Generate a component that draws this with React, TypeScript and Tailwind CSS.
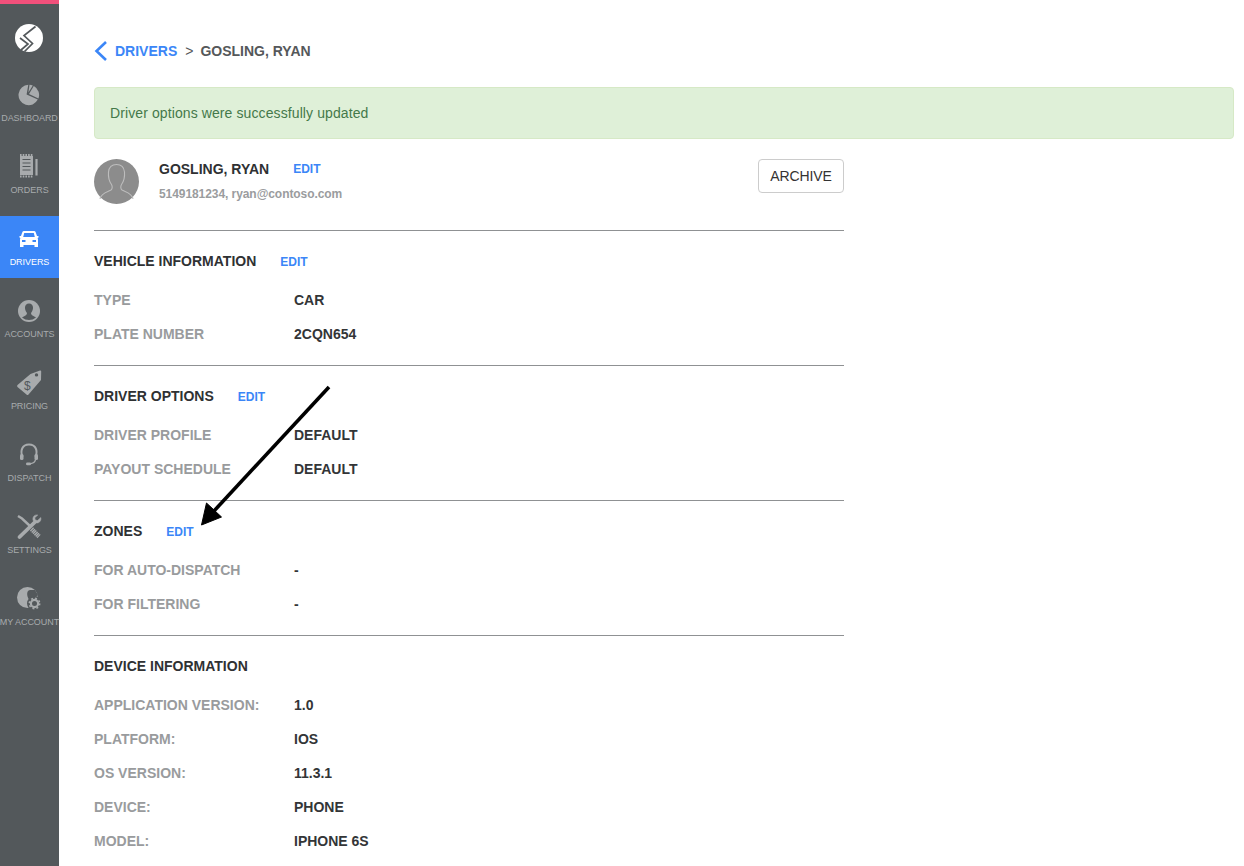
import React from "react";

const F = "font-['Liberation_Sans',Arial,sans-serif]";
const L = "#a8abad";
const D = "#53585b";

const Logo = () => (
  <svg width="28" height="28" viewBox="0 0 28 28">
    <circle cx="14" cy="14" r="14" fill="#fff" />
    <path d="M20.5 2.5 L9 11.5 L17.5 19.5 L9.5 27.5" fill="none" stroke={D} strokeWidth="1.7" />
    <path d="M5 14 L13 20 L6 26" fill="none" stroke={D} strokeWidth="1.7" />
  </svg>
);
const Pie = () => (
  <svg width="22" height="22" viewBox="0 0 22 22" fill={L}>
    <path d="M10.3 .8 L8.6 10.6 L19.8 15.6 A10.2 10.2 0 1 1 10.3 .8 Z" />
    <path d="M11.5 .8 A10.2 10.2 0 0 1 14.8 1.5 L10.4 8.6 Z" />
    <path d="M15.8 2 A10.2 10.2 0 0 1 20.4 14.6 L11 10 Z" />
  </svg>
);
const Receipt = () => (
  <svg width="18" height="25" viewBox="0 0 18 25">
    <rect x="0" y="2" width="13" height="19" fill={L} />
    <path d="M0 1 H13 M0 22.5 H13" stroke={L} strokeWidth="2" strokeDasharray="1.6 1.1" fill="none" />
    <path d="M2.5 5.5 H10.5 M2.5 9 H10.5 M2.5 12.5 H10.5 M2.5 16 H10.5" stroke={D} strokeWidth="1.2" fill="none" />
    <path d="M16.5 5 V21.5" stroke={L} strokeWidth="2.2" fill="none" />
  </svg>
);
const Car = () => (
  <svg width="20" height="18" viewBox="0 0 20 18" fill="#fff">
    <path fillRule="evenodd" d="M5 1 H15 Q16.3 1 16.8 2.4 L18 6 H19.5 V7.5 L18.6 8 Q19 9 19 10 V15 H19 V17 H15.5 V15 H4.5 V17 H1 V15 V10 Q1 9 1.4 8 L.5 7.5 V6 H2 L3.2 2.4 Q3.7 1 5 1 Z M5.2 3 L4.2 7 H15.8 L14.8 3 Z M3 10 V12 H6.5 V10 Z M13.5 10 V12 H17 V10 Z" />
  </svg>
);
const Account = () => (
  <svg width="22" height="22" viewBox="0 0 22 22">
    <circle cx="11" cy="11" r="11" fill={L} />
    <path d="M11 3.5 C8.3 3.5 6.8 5.6 7 8.2 C7.2 10.5 8.2 12 8.8 12.8 C9.2 14 8.6 14.8 7.5 15.4 L4 17.4 A11 11 0 0 0 18 17.4 L14.5 15.4 C13.4 14.8 12.8 14 13.2 12.8 C13.8 12 14.8 10.5 15 8.2 C15.2 5.6 13.7 3.5 11 3.5 Z" fill={D} />
  </svg>
);
const Tag = () => (
  <svg width="26" height="28" viewBox="0 0 26 28">
    <path fillRule="evenodd" d="M14.5 5 L24 1.5 Q25.2 1.2 25.2 2.5 L25 11 L12.5 25.5 Q11.5 26.5 10.5 25.5 L1.5 18 Q.6 17 1.5 16 Z M20.5 4.2 A1.7 1.7 0 1 0 20.5 7.6 A1.7 1.7 0 1 0 20.5 4.2 Z" fill={L} />
    <text x="8" y="21" fontSize="12" fill={D} fontFamily="'Liberation Sans',sans-serif">$</text>
  </svg>
);
const Headset = () => (
  <svg width="20" height="24" viewBox="0 0 20 24" fill="none" stroke={L}>
    <path d="M3.5 14 C1 8 3 1.5 10 1.5 C17 1.5 19 8 16.5 14" strokeWidth="2" />
    <rect x="1" y="11" width="3.5" height="6" rx="1.5" fill={L} strokeWidth="0" />
    <rect x="15.5" y="11" width="3.5" height="6" rx="1.5" fill={L} strokeWidth="0" />
    <path d="M16.5 16.5 C16 19.5 14 20.5 11 20.8" strokeWidth="1.4" />
    <rect x="7" y="19.5" width="5" height="2.8" rx="1.4" fill={L} strokeWidth="0" />
  </svg>
);
const Tools = () => (
  <svg width="26" height="26" viewBox="0 0 26 26" fill="none" stroke={L}>
    <path d="M2 2 L6 4.5 L14 12" strokeWidth="2.4" />
    <path d="M15.5 15 L23 22.5" strokeWidth="4.6" strokeDasharray="1.4 .5" />
    <path d="M18.5 8.5 L3.5 23" strokeWidth="3.8" strokeLinecap="round" />
    <path d="M24.8 3.5 L21.5 6.5 L19.3 6 L18.8 3.8 L21.8 1 C18.5 .2 15.8 3.4 17.3 6.7 L19.3 8.7 C22.5 10 25.8 7 24.8 3.5 Z" fill={L} strokeWidth="0.5" />
  </svg>
);
const MyAccount = () => (
  <svg width="24" height="24" viewBox="0 0 24 24">
    <circle cx="10.5" cy="10.5" r="10.5" fill={L} />
    <path d="M13 3 C10.8 3.3 10 5.4 10.2 7.6 C10.4 9.6 11 11 11.6 12 L13 17 L19 10 L21 8 L18 3 Z" fill={D} />
    <circle cx="17.5" cy="16.5" r="7.5" fill={D} />
    <circle cx="17.5" cy="16.5" r="3.6" fill="none" stroke={L} strokeWidth="2.2" />
    <circle cx="17.5" cy="16.5" r="5.2" fill="none" stroke={L} strokeWidth="1.6" strokeDasharray="1.9 2.18" />
  </svg>
);

const NAV: [string, React.ReactNode, boolean?][] = [
  ["DASHBOARD", <Pie />],
  ["ORDERS", <Receipt />],
  ["DRIVERS", <Car />, true],
  ["ACCOUNTS", <Account />],
  ["PRICING", <Tag />],
  ["DISPATCH", <Headset />],
  ["SETTINGS", <Tools />],
  ["MY ACCOUNT", <MyAccount />],
];

const Edit = () => <a className="text-[12px] font-bold text-[#3b86f7] leading-none">EDIT</a>;

function Row({ k, v, w = "w-[200px]" }: { k: string; v: string; w?: string }) {
  return (
    <div className="flex h-[34px] items-center text-[14px] font-bold">
      <div className={`${w} shrink-0 text-[#999b9d]`}>{k}</div>
      <div className="text-[#333537]">{v}</div>
    </div>
  );
}

function Section({ title, edit = true, rows }: { title: string; edit?: boolean; rows: [string, string][] }) {
  return (
    <section className="border-t border-[#8f9193] h-[135px] pt-[22px]">
      <div className="flex items-center h-[17px] gap-6 text-[14px] font-bold text-[#2f3133]">
        <span>{title}</span>
        {edit && <Edit />}
      </div>
      <div className="mt-[13px]">
        {rows.map(([k, v]) => (
          <Row key={k} k={k} v={v} />
        ))}
      </div>
    </section>
  );
}

export default function App() {
  return (
    <div className={`${F} flex h-[866px] w-[1244px] overflow-hidden bg-white relative`}>
      <aside className="w-[59px] shrink-0 bg-[#53585b] border-t-4 border-[#f2507b]">
        <div className="flex justify-center pr-px pt-5 h-[68px]">
          <Logo />
        </div>
        {NAV.map(([label, icon, active]) => (
          <div
            key={label}
            className={`h-[62px] mb-[10px] flex flex-col items-center ${active ? "bg-[#3b86f7] text-white" : "text-[#a8abad]"}`}
          >
            <div className="h-[39px] w-full flex items-center justify-center pr-px pt-[6px]">{icon}</div>
            <div className="text-[9px] leading-[12px] mt-[1px] whitespace-nowrap tracking-[-0.05px]">{label}</div>
          </div>
        ))}
      </aside>

      <main className="flex-1 pl-[35px] pr-[10px]">
        <div className="flex items-center h-[24px] mt-[39px] text-[14px] font-bold">
          <svg width="14" height="20" viewBox="0 0 14 20" fill="none" stroke="#3b86f7" strokeWidth="2.6" className="mr-[7px]">
            <path d="M12 1 L2.5 10 L12 19" />
          </svg>
          <span className="text-[#3b86f7]">DRIVERS</span>
          <span className="text-[#55585a] ml-2 mr-[7px] font-normal">&gt;</span>
          <span className="text-[#55585a]">GOSLING, RYAN</span>
        </div>

        <div className="mt-[24px] h-[52px] flex items-center pl-[15px] pr-4 rounded-[4px] border border-[#d6e9c6] bg-[#dff0d8] text-[14px] tracking-[0.1px] text-[#44794a]">
          Driver options were successfully updated
        </div>

        <div className="w-[750px]">
          <div className="h-[91px] pt-5 flex items-start">
            <svg width="45" height="45" viewBox="0 0 45 45" className="shrink-0">
              <circle cx="22.5" cy="22.5" r="22.5" fill="#8c8c8c" />
              <path d="M6 40 C7 34 13 33 17 31 C18.5 30 18.5 27 17.5 25.5 C15 22 14 19 14.5 13 C15 8 18 5.5 22.5 5.5 C27 5.5 30 8 30.5 13 C31 19 30 22 27.5 25.5 C26.5 27 26.5 30 28 31 C32 33 38 34 39 40" fill="none" stroke="#bdbdbd" strokeWidth="1.1" />
            </svg>
            <div className="ml-5">
              <div className="flex items-center h-[20px] gap-6 text-[14px] font-bold text-[#2f3133]">
                <span>GOSLING, RYAN</span>
                <Edit />
              </div>
              <div className="mt-[6px] text-[12px] font-bold tracking-[-0.07px] text-[#9a9c9e]">5149181234, ryan@contoso.com</div>
            </div>
            <button className="ml-auto h-[34px] w-[86px] rounded-[4px] border border-[#cccccc] bg-white text-[14px] tracking-[-0.1px] text-[#333333]">
              ARCHIVE
            </button>
          </div>

          <Section title="VEHICLE INFORMATION" rows={[["TYPE", "CAR"], ["PLATE NUMBER", "2CQN654"]]} />
          <Section title="DRIVER OPTIONS" rows={[["DRIVER PROFILE", "DEFAULT"], ["PAYOUT SCHEDULE", "DEFAULT"]]} />
          <Section title="ZONES" rows={[["FOR AUTO-DISPATCH", "-"], ["FOR FILTERING", "-"]]} />
          <Section
            title="DEVICE INFORMATION"
            edit={false}
            rows={[["APPLICATION VERSION:", "1.0"], ["PLATFORM:", "IOS"], ["OS VERSION:", "11.3.1"], ["DEVICE:", "PHONE"], ["MODEL:", "IPHONE 6S"]]}
          />
        </div>
      </main>

      <svg className="absolute left-0 top-0 pointer-events-none" width="1244" height="866" viewBox="0 0 1244 866">
        <path d="M329 387 L214 511" stroke="#000" strokeWidth="3.6" fill="none" />
        <path d="M201.5 525 L206.5 503 L221.5 517 Z" fill="#000" stroke="#000" strokeWidth="1" strokeLinejoin="round" />
      </svg>
    </div>
  );
}
